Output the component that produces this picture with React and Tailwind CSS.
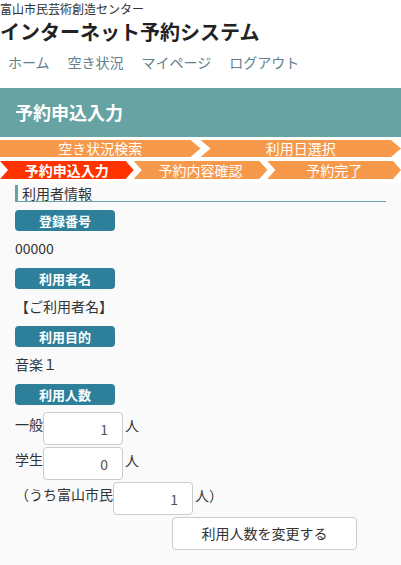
import React from 'react';

const font = "font-['Noto_Sans_CJK_JP','Noto_Sans',sans-serif]";

// right tip only / notch + tip
const firstArrow = '[clip-path:polygon(0_0,calc(100%-10px)_0,100%_50%,calc(100%-10px)_100%,0_100%)]';
const midArrow = '[clip-path:polygon(0_0,calc(100%-10px)_0,100%_50%,calc(100%-10px)_100%,0_100%,10px_50%)]';
const smallArrow = '[clip-path:polygon(0_0,calc(100%-8px)_0,100%_50%,calc(100%-8px)_100%,0_100%,8px_50%)]';

const Label = ({ children, first }) => (
  <div
    className={
      (first ? 'mt-[8px] ' : 'mt-[10px] ') +
      'w-[100px] h-[21px] rounded-[4px] bg-[#2e7f9a] text-center text-[13px] font-bold leading-[21px] text-white'
    }
  >
    {children}
  </div>
);

const Value = ({ children }) => (
  <p className="mt-[7px] text-[14px] leading-[20px] text-[#333]">{children}</p>
);

const CountRow = ({ label, value, after, className }) => (
  <div className={'flex items-start ' + (className || '')}>
    <span className="pt-[3px] text-[14px] leading-[18px] text-[#333]">{label}</span>
    <input
      type="text"
      defaultValue={value}
      className="h-[33px] w-[80px] rounded-[4px] border border-[#ccc] bg-white pr-[14px] text-right text-[14px] text-[#555] outline-none"
    />
    <span className="pt-[4px] pl-[2px] text-[14px] leading-[18px] text-[#333]">{after}</span>
  </div>
);

export default function App() {
  return (
    <div className={font + ' min-h-[565px] w-full bg-[#fafafa]'}>
      {/* Header */}
      <div className="bg-white">
        <p className="text-[12px] leading-[17px] text-[#333]">富山市民芸術創造センター</p>
        <h1 className="mt-[4px] text-[20px] font-bold leading-[22px] text-[#222]">インターネット予約システム</h1>
        <nav className="mt-[9px] flex gap-[18px] pl-[8px] text-[14px] leading-[20px] text-[#5f808c]">
          <a>ホーム</a>
          <a>空き状況</a>
          <a>マイページ</a>
          <a>ログアウト</a>
        </nav>
        <div className="h-[16px]" />
      </div>

      <div className="h-[49px] bg-[#68a3a3] pl-[15px] text-[18px] font-bold leading-[49px] text-white">
        予約申込入力
      </div>

      <div className="bg-white pt-[3px] pb-[4px]">
        {/* Steps row 1 */}
        <div className="flex h-[17px] text-[14px] leading-[17px] text-white">
          <div className={'flex-1 bg-[#f7994a] text-center ' + firstArrow}>空き状況検索</div>
          <div className={'flex-1 bg-[#f7994a] text-center ' + midArrow}>利用日選択</div>
        </div>
        {/* Steps row 2 */}
        <div className="mt-[4px] flex h-[18px] text-[14px] leading-[18px] text-white">
          <div className={'flex-1 bg-[#ff3300] text-center font-bold ' + smallArrow}>予約申込入力</div>
          <div className={'flex-1 bg-[#f7994a] text-center ' + smallArrow}>予約内容確認</div>
          <div className={'flex-1 bg-[#f7994a] text-center ' + smallArrow}>予約完了</div>
        </div>
      </div>

      <div className="px-[15px] pb-[16px]">
        <div className="mt-[2px] border-b border-l-[3px] border-[#68a3a3] pl-[4px] text-[14px] leading-[16px] text-[#333]">
          利用者情報
        </div>

        <Label first>登録番号</Label>
        <Value>00000</Value>

        <Label>利用者名</Label>
        <Value>【ご利用者名】</Value>

        <Label>利用目的</Label>
        <Value>音楽１</Value>

        <Label>利用人数</Label>
        <CountRow className="mt-[7px]" label="一般" value="1" after="人" />
        <CountRow className="mt-[2px]" label="学生" value="0" after="人" />
        <CountRow className="mt-[2px]" label="（うち富山市民" value="1" after="人）" />

        <button
          type="button"
          className="mt-[2px] ml-[157px] h-[33px] w-[185px] rounded-[4px] border border-[#ccc] bg-white text-[14px] text-[#333]"
        >
          利用人数を変更する
        </button>
      </div>
    </div>
  );
}
